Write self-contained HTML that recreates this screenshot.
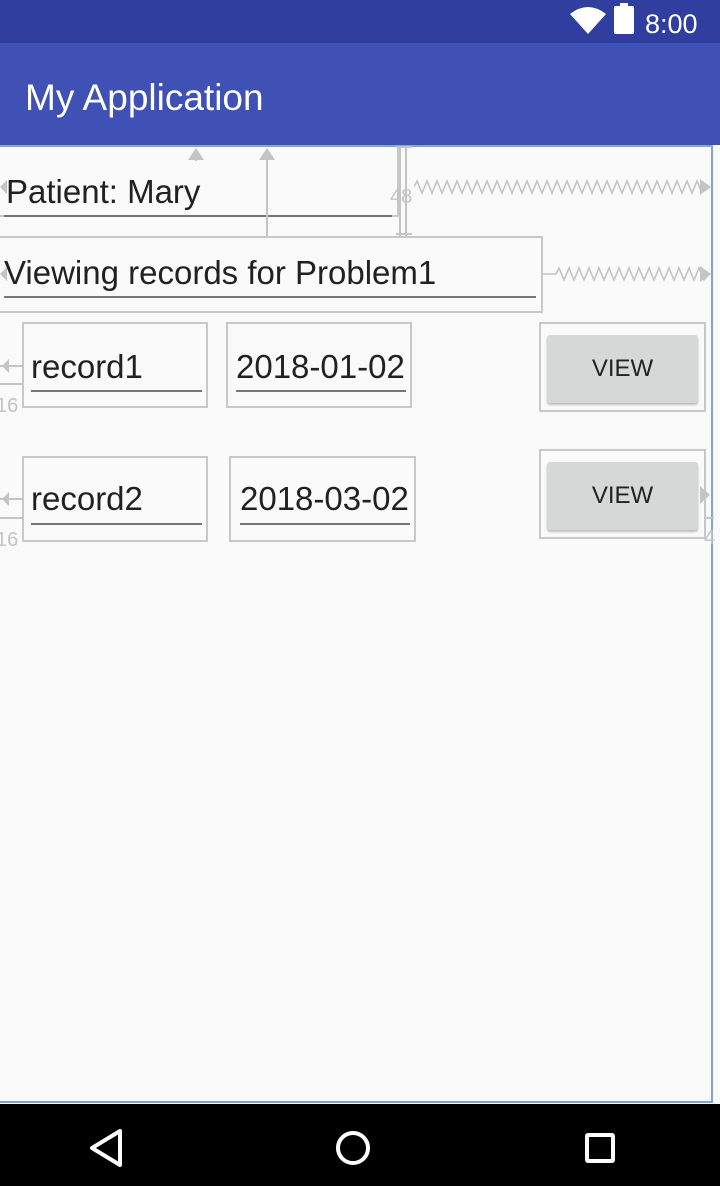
<!DOCTYPE html>
<html><head><style>
*{margin:0;padding:0;box-sizing:border-box}
body{width:720px;height:1186px;background:#fafafa;position:relative;overflow:hidden;font-family:"Liberation Sans",sans-serif;color:#212121}
.a{position:absolute}
.box{position:absolute;border:2px solid #c8c8c8}
.ul{position:absolute;height:2px;background:#757575}
.t{position:absolute;font-size:33px;white-space:nowrap;line-height:1}
.btn{position:absolute;background:#d6d7d7;border-radius:3px;box-shadow:0 2px 2px rgba(0,0,0,.25);font-size:24px;text-align:center;color:#222}
</style></head><body>
<div class="a" style="left:0;top:0;width:720px;height:43px;background:#303f9f"></div>
<svg class="a" style="left:568px;top:4px" width="40" height="32"><path d="M2 10 Q20 -4 38 10 L20 30 Z" fill="#fff"/></svg>
<div class="a" style="left:614px;top:6px;width:20px;height:28px;background:#fff;border-radius:2px"></div>
<div class="a" style="left:620px;top:3px;width:8px;height:4px;background:#fff"></div>
<div class="a" style="left:645px;top:9px;color:#fff;font-size:27px">8:00</div>
<div class="a" style="left:0;top:43px;width:720px;height:102px;background:#3f51b5"></div>
<div class="a" style="left:25px;top:77px;color:#fff;font-size:37px">My Application</div>
<div class="a" style="left:0;top:145px;width:713px;height:958px;border-right:2px solid #7fa6d9;border-bottom:2px solid #7fa6d9;border-top:2px solid #7fa6d9"></div>
<div class="a" style="left:0;top:1104px;width:720px;height:82px;background:#000"></div>
<svg class="a" style="left:0;top:1104px" width="720" height="82"><path d="M120 27 L92 44 L120 61 Z" fill="none" stroke="#fff" stroke-width="4" stroke-linejoin="round"/><circle cx="353" cy="44" r="15" fill="none" stroke="#fff" stroke-width="4"/><rect x="587" y="31" width="26" height="26" fill="none" stroke="#fff" stroke-width="4" rx="1"/></svg>

<div class="box" style="left:-2px;top:147px;width:401px;height:70px;border-top:none"></div>
<div class="t" style="left:6px;top:175px">Patient: Mary</div>
<div class="ul" style="left:4px;top:215px;width:388px"></div>
<svg class="a" style="left:414px;top:145px" width="286" height="60" fill="none" stroke="#c4c4c4" stroke-width="1.6">
<path d="M0 42 l3 -6 5 12 5 -12 5 12 5 -12 5 12 5 -12 5 12 5 -12 5 12 5 -12 5 12 5 -12 5 12 5 -12 5 12 5 -12 5 12 5 -12 5 12 5 -12 5 12 5 -12 5 12 5 -12 5 12 5 -12 5 12 5 -12 5 12 5 -12 5 12 5 -12 5 12 5 -12 5 12 5 -12 5 12 5 -12 5 12 5 -12 5 12 5 -12 5 12 5 -12 5 12 5 -12 5 12 5 -12 5 12 5 -12 5 12 5 -12 5 12 5 -12 5 12 5 -12 5 12 5 -12 5 12 5 -12 5 12 5 -12 5 12 5 -12 5 12 5 -12 5 12 5 -12 5 12 5 -12 5 12 5 -12 5 12 5 -12 5 12 5 -6"/>
</svg>
<svg class="a" style="left:0;top:145px" width="720" height="150" fill="none" stroke="#c4c4c4" stroke-width="1.6">
<path d="M543 129 H556 l3 -6 5 12 5 -12 5 12 5 -12 5 12 5 -12 5 12 5 -12 5 12 5 -12 5 12 5 -12 5 12 5 -12 5 12 5 -12 5 12 5 -12 5 12 5 -12 5 12 5 -12 5 12 5 -12 5 12 5 -12 5 12 5 -12 5 12 5 -6"/>
<path stroke-width="2" d="M196 16 V6 M267 5 V92 M400 2 V92 M406 2 V92 M396 2 H412 M396 89 H412"/>
<path d="M188 15 L196 3 L204 15 Z M259 15 L267 3 L275 15 Z" fill="#c4c4c4" stroke="none"/>
<path d="M700 34 L711 42 L700 50 Z M700 121 L711 129 L700 137 Z" fill="#c4c4c4" stroke="none"/>
<path d="M7 35 L0 42 L7 49 Z M7 122 L0 129 L7 136 Z" fill="#c4c4c4" stroke="none"/>
</svg>
<div class="a" style="left:390px;top:186px;font-size:20px;color:#c4c4c4">48</div>
<div class="box" style="left:-2px;top:236px;width:545px;height:77px"></div>
<div class="t" style="left:4px;top:256px">Viewing records for Problem1</div>
<div class="ul" style="left:4px;top:296px;width:532px"></div>

<div class="box" style="left:22px;top:322px;width:186px;height:86px"></div>
<div class="t" style="left:31px;top:350px">record1</div>
<div class="ul" style="left:31px;top:390px;width:171px"></div>
<div class="box" style="left:226px;top:322px;width:186px;height:86px"></div>
<div class="t" style="left:236px;top:350px">2018-01-02</div>
<div class="ul" style="left:236px;top:390px;width:170px"></div>
<div class="box" style="left:539px;top:322px;width:167px;height:90px"></div>
<div class="btn" style="left:547px;top:335px;width:151px;height:68px;line-height:68px">VIEW</div>

<div class="box" style="left:22px;top:456px;width:186px;height:86px"></div>
<div class="t" style="left:31px;top:482px">record2</div>
<div class="ul" style="left:31px;top:523px;width:171px"></div>
<div class="box" style="left:229px;top:456px;width:187px;height:86px"></div>
<div class="t" style="left:240px;top:482px">2018-03-02</div>
<div class="ul" style="left:240px;top:523px;width:170px"></div>
<div class="box" style="left:539px;top:449px;width:167px;height:90px"></div>
<div class="btn" style="left:547px;top:462px;width:151px;height:68px;line-height:68px">VIEW</div>
<svg class="a" style="left:0;top:340px" width="720" height="210" fill="none" stroke="#c4c4c4" stroke-width="2">
<path d="M0 26 H22 M0 44 H22 M0 159 H22 M0 178 H22 M706 178 H714"/>
<path d="M9 19 L2 26 L9 33 Z M9 152 L2 159 L9 166 Z M700 146 L710 155 L700 164 Z" fill="#c4c4c4" stroke="none"/>
</svg>
<div class="a" style="left:-4px;top:395px;font-size:20px;color:#c4c4c4">16</div>
<div class="a" style="left:-4px;top:529px;font-size:20px;color:#c4c4c4">16</div>
<div class="a" style="left:704px;top:527px;font-size:20px;color:#c4c4c4">4</div>
</body></html>
